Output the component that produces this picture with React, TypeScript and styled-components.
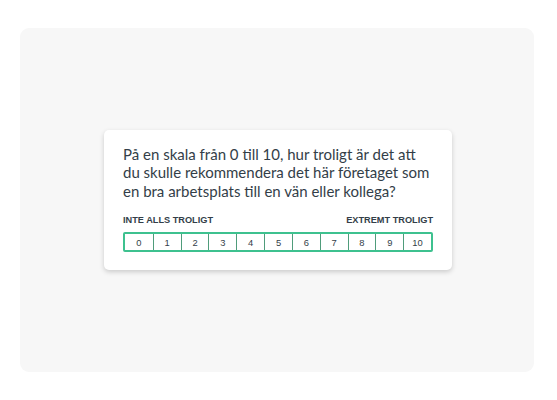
import React from 'react';
import styled, { createGlobalStyle } from 'styled-components';

const GlobalStyle = createGlobalStyle`
    html, body {
        margin: 0;
        padding: 0;
        background: #ffffff;
    }
    body {
        font-family: Lato, "Noto Sans", sans-serif;
    }
`;

const scores = [0, 1, 2, 3, 4, 5, 6, 7, 8, 9, 10];

const App: React.FC = () => {
    return (
        <>
            <GlobalStyle />
            <Page>
                <Panel>
                    <Card>
                        <Question>
                            På en skala från 0 till 10, hur troligt är det att<br />
                            du skulle rekommendera det här företaget som<br />
                            en bra arbetsplats till en vän eller kollega?
                        </Question>
                        <Labels>
                            <span>INTE ALLS TROLIGT</span>
                            <span>EXTREMT TROLIGT</span>
                        </Labels>
                        <Scale>
                            {scores.map((s) => (
                                <Cell key={s}>{s}</Cell>
                            ))}
                        </Scale>
                    </Card>
                </Panel>
            </Page>
        </>
    );
};

export default App;

const Page = styled.div`
    width: 557px;
    height: 400px;
    padding: 28px 23px 28px 20px;
    box-sizing: border-box;
`;

const Panel = styled.div`
    width: 100%;
    height: 100%;
    background-color: #f7f7f7;
    border-radius: 9px;
    display: flex;
    align-items: center;
    justify-content: center;
    padding-left: 2px;
    box-sizing: border-box;
`;

const Card = styled.div`
    width: 348px;
    box-sizing: border-box;
    padding: 15px 19px 18px 19px;
    background-color: #ffffff;
    border-radius: 5px;
    box-shadow: 0px 2px 5px rgba(0, 0, 0, 0.18);
`;

const Question = styled.p`
    margin: 0;
    font-family: Lato, sans-serif;
    font-size: 15px;
    line-height: 18.5px;
    color: #333e48;
    white-space: nowrap;
`;

const Labels = styled.div`
    display: flex;
    justify-content: space-between;
    margin-top: 15px;
    font-family: "Liberation Sans", Arial, sans-serif;
    font-size: 9.2px;
    font-weight: bold;
    color: #333e48;
`;

const Scale = styled.div`
    display: grid;
    grid-template-columns: repeat(11, 1fr);
    margin-top: 7px;
    height: 20px;
    border: 2px solid #3ec18f;
    border-radius: 2px;
    box-sizing: border-box;
`;

const Cell = styled.div`
    display: flex;
    align-items: center;
    justify-content: center;
    font-family: "Liberation Sans", Arial, sans-serif;
    font-size: 9.4px;
    color: #333e48;
    border-left: 1px solid #4f9c7b;

    &:first-child {
        border-left: none;
    }
`;
